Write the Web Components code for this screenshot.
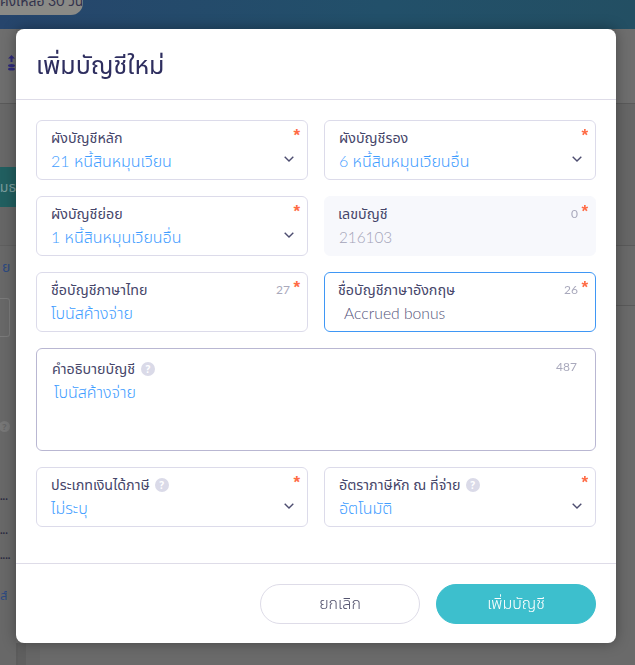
<!DOCTYPE html>
<html lang="th">
<head>
<meta charset="utf-8">
<title>เพิ่มบัญชีใหม่</title>
<style>
  html, body { margin: 0; height: 100%; overflow: hidden; }
  body { font-family: "Lato", "Noto Sans", "Noto Sans Thai", sans-serif; background: #6a6a6a; }
</style>
</head>
<body>
<page-behind></page-behind>
<modal-dialog heading="เพิ่มบัญชีใหม่">
  <form-field label="ผังบัญชีหลัก" value="21 หนี้สินหมุนเวียน" select required></form-field>
  <form-field label="ผังบัญชีรอง" value="6 หนี้สินหมุนเวียนอื่น" select required></form-field>
  <form-field label="ผังบัญชีย่อย" value="1 หนี้สินหมุนเวียนอื่น" select required></form-field>
  <form-field label="เลขบัญชี" value="216103" count="0" required kind="disabled"></form-field>
  <form-field label="ชื่อบัญชีภาษาไทย" value="โบนัสค้างจ่าย" count="27" required></form-field>
  <form-field label="ชื่อบัญชีภาษาอังกฤษ" value="Accrued bonus" count="26" required kind="focus"></form-field>
  <form-field label="คำอธิบายบัญชี" value="โบนัสค้างจ่าย" count="487" help kind="area"></form-field>
  <form-field label="ประเภทเงินได้ภาษี" value="ไม่ระบุ" select required help></form-field>
  <form-field label="อัตราภาษีหัก ณ ที่จ่าย" value="อัตโนมัติ" select required help></form-field>
  <action-button slot="footer">ยกเลิก</action-button>
  <action-button slot="footer" primary>เพิ่มบัญชี</action-button>
</modal-dialog>

<script>
// page under the modal, only the edges show
var template_behind = document.createElement("template");
template_behind.innerHTML = `
<style>
  :host { display: flex; flex-direction: column; height: 665px; color: #33334d; font-size: 14px; }
  .banner { height: 29px; flex: none; background: linear-gradient(90deg, #26456c, #22506a 60%, #234f63); }
  .pill { width: 83px; height: 15px; background: #8a8a86; border-radius: 0 0 12px 0; overflow: hidden;
          font-size: 14px; line-height: 1px; color: #33334d; white-space: nowrap; text-align: right; padding-right: 16px; box-sizing: border-box; }
  .under { flex: 1; display: flex; min-height: 0; }
  .left { width: 16px; flex: none; display: flex; flex-direction: column; overflow: hidden; }
  .mid { width: 600px; flex: none; display: flex; align-items: flex-end; }
  .right { flex: 1; display: flex; flex-direction: column; background: #6c6c6c; }
  .right div { border-bottom: 1px solid #5a5a5a; box-sizing: border-box; }
  .foot { height: 22px; width: 100%; background: linear-gradient(90deg, #5c5c5c 0 2px, #5f5f5f 2px 10px, #666 10px 24px, #6a6a6a 24px); }
  .top { height: 75px; border-bottom: 1px solid #5a5a5a; box-sizing: border-box; padding: 26px 0 0 8px; background: #6e6e6e; }
  .gap { height: 63px; background: #686868; }
  .teal { height: 40px; background: #215f60; color: #7a9c9c; font-size: 14px; line-height: 40px; white-space: nowrap; direction: rtl; overflow: hidden; }
  .blank { height: 39px; background: #666; border-bottom: 1px solid #5f5f5f; box-sizing: border-box; }
  .row { display: flex; flex-direction: column; padding-top: 12px; background: #686868; flex: 1; }
  .ya { color: #2d4a80; font-size: 14px; line-height: 18px; margin-left: 2px; }
  .box { width: 10px; height: 39px; border: 1px solid #7a7a7a; border-left: 0; border-radius: 0 3px 3px 0; margin-top: 22px; box-sizing: border-box; flex: none; }
  .ask { width: 11px; height: 11px; border-radius: 50%; background: #777; margin: 84px 0 0 -1px; color: #666; font: bold 9px/11px "Noto Sans", sans-serif; text-align: center; flex: none; }
  .dots { font-size: 11px; line-height: 8px; color: #2a2a40; font-weight: bold; white-space: nowrap; }
  .d1 { margin-top: 60px; } .d2 { margin-top: 26px; } .d3 { margin-top: 17px; }
  .sa { font-size: 13px; line-height: 16px; color: #2d4a80; margin-top: 28px; text-align: right; white-space: nowrap; width: 7px; overflow: hidden; }
  svg { display: block; }
</style>
<div class="banner"><div class="pill">คงเหลือ 30 วัน</div></div>
<div class="under">
  <div class="left">
    <div class="top">
      <svg width="7" height="16" viewBox="0 0 7 16" fill="#2f2a7a"><path d="M3.5 0 7 3.5H4.5V7h-2V3.5H0z"/><ellipse cx="3.5" cy="10.5" rx="3.5" ry="1.6"/><ellipse cx="3.5" cy="14" rx="3.5" ry="1.6"/></svg>
    </div>
    <div class="gap"></div>
    <div class="teal">เมธ</div>
    <div class="blank"></div>
    <div class="row">
      <div class="ya">ย</div>
      <div class="box"></div>
      <div class="ask">?</div>
      <div class="dots d1">...</div>
      <div class="dots d2">...</div>
      <div class="dots d3">....</div>
      <div class="sa">ส์</div>
    </div>
  </div>
  <div class="mid"><div class="foot"></div></div>
  <div class="right">
    <div style="height:75px;background:#6e6e6e"></div>
    <div style="height:142px;background:#666"></div>
    <div style="height:60px;background:#696969"></div>
    <div style="flex:1;background:#6a6a6a;border:0"></div>
  </div>
</div>
`;
class PageBehind extends HTMLElement {
  constructor(){
    super();
    this.attachShadow({mode:"open"});
  }
  connectedCallback(){
    this.shadowRoot.appendChild(template_behind.content.cloneNode(true));
  }
}
customElements.define("page-behind", PageBehind);

// the dialog itself
var template_dialog = document.createElement("template");
template_dialog.innerHTML = `
<style>
  :host { position: fixed; left: 16px; top: 29px; width: 600px; height: 614px; box-sizing: border-box;
          display: flex; flex-direction: column; background: #fff; border-radius: 8px;
          box-shadow: 0 0 14px rgba(0,0,0,.35); }
  header { height: 71px; flex: none; box-sizing: border-box; border-bottom: 1px solid #dedce8; padding: 3px 20px 0;
           display: flex; align-items: center; font-size: 25px; color: #2e2e5f; }
  .body { flex: 1; box-sizing: border-box; padding: 20px; display: grid; grid-template-columns: 272px 272px; gap: 16px;
          align-content: start; }
  footer { height: 80px; flex: none; box-sizing: border-box; border-top: 1px solid #dedce8; padding: 20px;
           display: flex; justify-content: flex-end; gap: 16px; }
</style>
<header id="title"></header>
<div class="body"><slot></slot></div>
<footer><slot name="footer"></slot></footer>
`;
class ModalDialog extends HTMLElement {
  constructor(){
    super();
    this.attachShadow({mode:"open"});
  }
  connectedCallback(){
    this.shadowRoot.appendChild(template_dialog.content.cloneNode(true));
    this.shadowRoot.querySelector("#title").innerText = this.getAttribute("heading");
  }
}
customElements.define("modal-dialog", ModalDialog);

// one labelled field, select / input / textarea look
var template_field = document.createElement("template");
template_field.innerHTML = `
<style>
  :host { display: block; box-sizing: border-box; position: relative; height: 60px; border: 1px solid #dcdbea; border-radius: 6px;
          background: #fff; padding: 7px 14px 0 14px; min-width: 0; }
  :host([kind="disabled"]) { background: #f7f8fc; border-color: #f7f8fc; padding-left: 13px; }
  :host([kind="focus"]) { border-color: #3f97f5; padding-left: 13px; }
  :host([kind="area"]) { grid-column: 1 / -1; height: 103px; border-color: #b9b7d2; padding: 10px 14px 0 15px; }
  .label { display: flex; align-items: center; gap: 5px; font-size: 14.3px; line-height: 20px; color: #46466a; white-space: nowrap; }
  :host([kind="area"]) .label { gap: 6px; }
  .value { font-size: 16px; line-height: 24px; margin-top: 1px; color: #3f9dff; white-space: nowrap; font-weight: 350; }
  :host([kind="disabled"]) .value { color: #a3a3b8; margin-left: 1px; font-size: 15.3px; }
  :host([kind="focus"]) .value { color: #54547a; margin-left: 6px; font-size: 15.7px; }
  :host([kind="area"]) .value { margin-left: 2px; }
  .help { width: 14px; height: 14px; border-radius: 50%; background: #dadae8; color: #fff; flex: none;
          font: bold 10px/14px "Noto Sans", sans-serif; text-align: center; }
  .count { position: absolute; right: 17px; top: 9px; font-size: 12px; line-height: 16px; color: #a9a9bc; }
  :host([kind="area"]) .count { right: 18px; top: 10px; font-size: 12px; }
  .star { position: absolute; right: 7px; top: 5px; font: bold 17px/20px "Liberation Sans", sans-serif; color: #ff6b45; }
  svg { position: absolute; right: 13px; top: 35px; display: block; }
</style>
<div class="label"><span id="label"></span></div>
<div class="value" id="value"></div>
`;
class FormField extends HTMLElement {
  constructor(){
    super();
    this.attachShadow({mode:"open"});
  }
  connectedCallback(){
    var root = this.shadowRoot;
    root.appendChild(template_field.content.cloneNode(true));
    root.querySelector("#label").innerText = this.getAttribute("label");
    root.querySelector("#value").innerText = this.getAttribute("value");
    if(this.hasAttribute("help")){
      var h = document.createElement("span");
      h.className = "help";
      h.innerText = "?";
      root.querySelector(".label").appendChild(h);
    }
    if(this.getAttribute("count")){
      var c = document.createElement("span");
      c.className = "count";
      c.innerText = this.getAttribute("count");
      root.appendChild(c);
    }
    if(this.hasAttribute("required")){
      var s = document.createElement("span");
      s.className = "star";
      s.innerText = "*";
      root.appendChild(s);
    }
    if(this.hasAttribute("select")){
      var t = document.createElement("template");
      t.innerHTML = '<svg width="10" height="6" viewBox="0 0 10 6" fill="none" stroke="#4d4d70" stroke-width="1.4"><path d="M.7.7 5 5 9.3.7"/></svg>';
      root.appendChild(t.content);
    }
  }
}
customElements.define("form-field", FormField);

var template_button = document.createElement("template");
template_button.innerHTML = `
<style>
  :host { display: flex; align-items: center; justify-content: center; box-sizing: border-box; width: 160px; height: 40px;
          border-radius: 20px; border: 1px solid #dedce8; background: #fff; color: #54546f; font-size: 16px; font-weight: 300; }
  :host([primary]) { background: #3dbfcd; border-color: #3dbfcd; color: #fff; }
</style>
<slot></slot>
`;
class ActionButton extends HTMLElement {
  constructor(){
    super();
    this.attachShadow({mode:"open"});
    this.shadowRoot.appendChild(template_button.content.cloneNode(true));
  }
}
customElements.define("action-button", ActionButton);
</script>
</body>
</html>
